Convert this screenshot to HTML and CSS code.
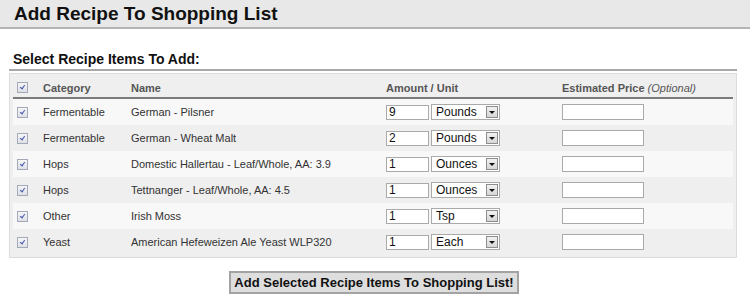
FILE: index.html
```html
<!DOCTYPE html>
<html lang="en">

<head>
    <meta charset="UTF-8">
    <title>Add Recipe To Shopping List</title>
    <link rel="stylesheet" href="styles.css">
</head>

<body>

    <header class="page-head">
        <h1>Add Recipe To Shopping List</h1>
    </header>

    <div class="content">
        <h2>Select Recipe Items To Add:</h2>

        <div class="panel">
            <table class="items">
                <thead>
                    <tr>
                        <th class="col-check"><span class="check"></span></th>
                        <th class="col-cat">Category</th>
                        <th class="col-name">Name</th>
                        <th class="col-amount">Amount / Unit</th>
                        <th class="col-price">Estimated Price <em>(Optional)</em></th>
                    </tr>
                </thead>
                <tbody>
                    <tr>
                        <td class="col-check"><span class="check"></span></td>
                        <td>Fermentable</td>
                        <td>German - Pilsner</td>
                        <td><input class="amount" type="text" value="9"><span class="unit">Pounds<i class="arrow"></i></span></td>
                        <td><input class="price" type="text"></td>
                    </tr>
                    <tr>
                        <td class="col-check"><span class="check"></span></td>
                        <td>Fermentable</td>
                        <td>German - Wheat Malt</td>
                        <td><input class="amount" type="text" value="2"><span class="unit">Pounds<i class="arrow"></i></span></td>
                        <td><input class="price" type="text"></td>
                    </tr>
                    <tr>
                        <td class="col-check"><span class="check"></span></td>
                        <td>Hops</td>
                        <td>Domestic Hallertau - Leaf/Whole, AA: 3.9</td>
                        <td><input class="amount" type="text" value="1"><span class="unit">Ounces<i class="arrow"></i></span></td>
                        <td><input class="price" type="text"></td>
                    </tr>
                    <tr>
                        <td class="col-check"><span class="check"></span></td>
                        <td>Hops</td>
                        <td>Tettnanger - Leaf/Whole, AA: 4.5</td>
                        <td><input class="amount" type="text" value="1"><span class="unit">Ounces<i class="arrow"></i></span></td>
                        <td><input class="price" type="text"></td>
                    </tr>
                    <tr>
                        <td class="col-check"><span class="check"></span></td>
                        <td>Other</td>
                        <td>Irish Moss</td>
                        <td><input class="amount" type="text" value="1"><span class="unit">Tsp<i class="arrow"></i></span></td>
                        <td><input class="price" type="text"></td>
                    </tr>
                    <tr>
                        <td class="col-check"><span class="check"></span></td>
                        <td>Yeast</td>
                        <td>American Hefeweizen Ale Yeast WLP320</td>
                        <td><input class="amount" type="text" value="1"><span class="unit">Each<i class="arrow"></i></span></td>
                        <td><input class="price" type="text"></td>
                    </tr>
                </tbody>
            </table>
        </div>

        <div class="actions">
            <button type="button">Add Selected Recipe Items To Shopping List!</button>
        </div>
    </div>

</body>

</html>
```

FILE: styles.css
```css
body {
    font-family: 'Liberation Sans', Arial, sans-serif;
    margin: 0;
    padding: 0;
    background-color: #fff;
    color: #222;
}

.page-head {
    height: 27px;
    background-color: #e8e8e8;
    border-bottom: 2px solid #b4b4b4;
    padding-left: 14px;
}

h1 {
    margin: 0;
    font-size: 19px;
    line-height: 27px;
    color: #111;
}

.content {
    padding: 0 13px 0 9px;
}

h2 {
    margin: 22px 0 0;
    padding: 0 0 1px 4px;
    font-size: 14px;
    line-height: 17px;
    color: #111;
    border-bottom: 2px solid #a9a9a9;
}

.panel {
    margin-top: 2px;
    background-color: #efefef;
    border: 1px solid #dcdcdc;
    padding: 5px 3px 2px 3px;
}

.items {
    width: 100%;
    border-collapse: collapse;
    font-size: 11px;
    color: #333;
}

.items th {
    text-align: left;
    font-weight: bold;
    color: #555;
    height: 17px;
    padding: 0 0 1px;
    border-bottom: 2px solid #7a7a7a;
}

.items th em {
    font-weight: normal;
    color: #555;
}

.items td {
    height: 26px;
    padding: 0;
}

.items tbody tr:nth-child(odd) {
    background-color: #f8f8f8;
}

.col-check {
    width: 26px;
    padding-left: 4px !important;
}

.col-cat {
    width: 88px;
}

.col-name {
    width: 255px;
}

.col-amount {
    width: 176px;
}

.check {
    display: block;
    width: 9px;
    height: 9px;
    border: 1px solid #a3a9b8;
    background: linear-gradient(#f6f6f6, #dfe0e6);
    position: relative;
}

.check::after {
    content: "";
    position: absolute;
    left: 3px;
    top: 1px;
    width: 2px;
    height: 4px;
    border: solid #4659b0;
    border-width: 0 1.5px 1.5px 0;
    transform: rotate(35deg);
}

.amount {
    box-sizing: border-box;
    width: 43px;
    height: 15px;
    border: 1px solid #aaa;
    padding: 0 2px;
    margin: 0;
    font-family: 'Liberation Sans', Arial, sans-serif;
    font-size: 12px;
    color: #111;
    vertical-align: middle;
    background: #fff;
}

.unit {
    box-sizing: border-box;
    display: inline-block;
    position: relative;
    width: 69px;
    height: 16px;
    margin-left: 2px;
    border: 1px solid #aaa;
    background: #fff;
    padding-left: 4px;
    font-size: 12px;
    line-height: 14px;
    color: #111;
    vertical-align: middle;
}

.arrow {
    position: absolute;
    right: 1px;
    top: 1px;
    width: 12px;
    height: 12px;
    background: linear-gradient(#f2f2f2, #d6d6d6);
    border: 1px solid #8d8d8d;
    box-sizing: border-box;
}

.arrow::after {
    content: "";
    position: absolute;
    left: 2px;
    top: 4px;
    border-left: 3px solid transparent;
    border-right: 3px solid transparent;
    border-top: 3px solid #111;
}

.price {
    box-sizing: border-box;
    width: 82px;
    height: 16px;
    margin: 0;
    border: 1px solid #aaa;
    background: #fff;
    vertical-align: middle;
}

.actions {
    text-align: center;
    margin-top: 13px;
    padding-left: 2px;
}

button {
    font-family: 'Liberation Sans', Arial, sans-serif;
    font-size: 13px;
    font-weight: bold;
    color: #111;
    background-color: #dedede;
    border: 2px solid #a3a3a3;
    border-radius: 0;
    padding: 2px 3px;
    height: 23px;
    cursor: pointer;
}

button:hover {
    background-color: #d2d2d2;
}
```
